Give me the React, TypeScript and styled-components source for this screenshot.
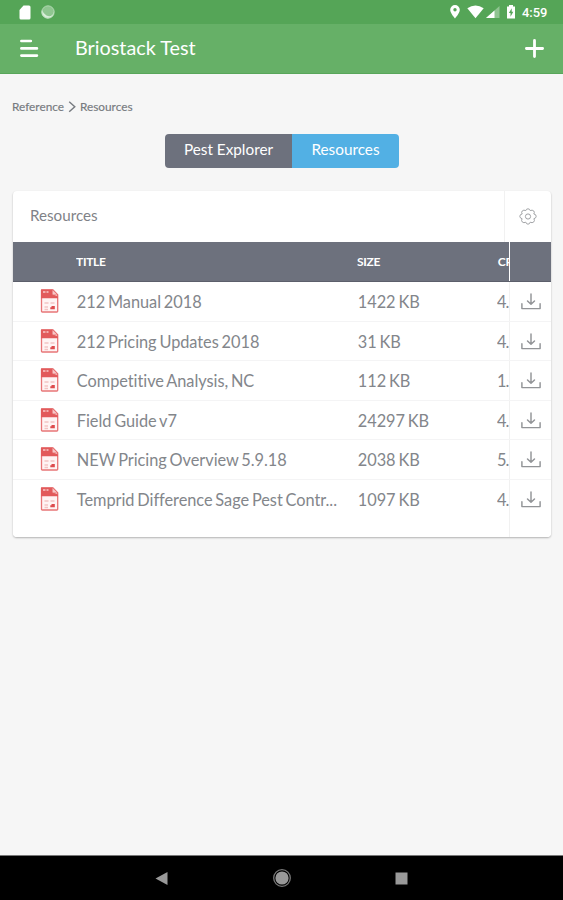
import React from 'react';
import styled, { createGlobalStyle } from 'styled-components';

const GlobalStyle = createGlobalStyle`
  * { box-sizing: border-box; }
  body { margin: 0; background: #f6f6f6; font-family: Lato, sans-serif; color: #7f8287; }
  svg { display: block; flex: none; }
  button { border: 0; padding: 0; margin: 0; background: none; font: inherit; color: inherit; }
`;

const Screen = styled.div`
  width: 563px;
  height: 900px;
  display: flex;
  flex-direction: column;
  overflow: hidden;
`;

const StatusBar = styled.div`
  height: 24px;
  flex: none;
  background: #55a557;
  display: flex;
  align-items: center;
  padding: 0 15px 0 19px;
  color: #fff;
`;

const StatusIcons = styled.div<{ $end?: boolean }>`
  display: flex;
  align-items: center;
  gap: ${p => (p.$end ? 0 : '10px')};
  margin-left: ${p => (p.$end ? 'auto' : 0)};
`;

const Clock = styled.span`
  width: 26px;
  margin-left: 6px;
  font: 500 12.9px/25px Roboto, sans-serif;
  white-space: nowrap;
`;

const AppBar = styled.header`
  height: 50px;
  flex: none;
  background: #66b067;
  border-bottom: 1px solid #58a65a;
  display: flex;
  align-items: center;
  padding: 0 19px 0 20px;
  color: #fff;
`;

const AppTitle = styled.h1`
  flex: 1;
  margin: 0 0 3px 36px;
  font-size: 19.8px;
  line-height: 46px;
  font-weight: 400;
`;

const Content = styled.main`
  flex: 1;
  padding: 25px 12px 0;
`;

const Breadcrumb = styled.nav`
  height: 16px;
  display: flex;
  align-items: center;
  gap: 4px;
  font-size: 11.8px;
  line-height: 16px;
  color: #777a7f;
  -webkit-text-stroke: 0.15px #777a7f;
`;

const Segments = styled.div`
  width: 234px;
  height: 34px;
  margin: 19px 0 0 153px;
  display: flex;
  border-radius: 4px;
  overflow: hidden;
`;

const Segment = styled.button<{ $active?: boolean }>`
  width: ${p => (p.$active ? 107 : 127)}px;
  height: 34px;
  padding-bottom: 4px;
  background: ${p => (p.$active ? '#52b0e4' : '#6d717d')};
  color: #fff;
  font-size: 15.3px;
`;

const Card = styled.section`
  width: 538px;
  height: 346px;
  margin: 23px 0 0 1px;
  background: #fff;
  border-radius: 4px;
  box-shadow: 0 1px 2px rgba(0, 0, 0, 0.28);
  overflow: hidden;
`;

const CardHeader = styled.div`
  height: 51px;
  display: flex;
  align-items: center;
`;

const CardTitle = styled.h2`
  flex: 1;
  margin: 0 0 3px;
  padding-left: 17px;
  font-size: 15.2px;
  font-weight: 400;
`;

const SettingsButton = styled.button`
  width: 47px;
  height: 51px;
  border-left: 1px solid #f1f1f1;
  display: flex;
  align-items: center;
  justify-content: center;
`;

const TableRow = styled.div<{ $head?: boolean; $last?: boolean }>`
  display: grid;
  grid-template-columns: 63px 281px 140px 12px 42px;
  height: ${p => (p.$head ? '40px' : p.$last ? '57.5px' : '39.5px')};
  line-height: ${p => (p.$head ? '40px' : '39.5px')};
  font-size: ${p => (p.$head ? 12 : 16.35)}px;
  font-weight: ${p => (p.$head ? 700 : 400)};
  letter-spacing: ${p => (p.$head ? '-0.3px' : '-0.04px')};
  word-spacing: -1.3px;
  color: ${p => (p.$head ? '#fff' : '#83868b')};
  background: ${p => (p.$head ? '#6d717d' : '#fff')};
  border-bottom: ${p => (p.$head ? '1px solid #5c5f6b' : p.$last ? '0' : '1px solid #f4f4f5')};
`;

const FileCell = styled.div`
  padding: 7px 0 0 27px;
`;

const TextCell = styled.div<{ $inset?: boolean; $tight?: boolean }>`
  padding-left: ${p => (p.$inset ? 0.8 : 0)}px;
  letter-spacing: ${p => (p.$tight ? '-0.9px' : 'inherit')};
  white-space: nowrap;
  overflow: hidden;
`;

const ActionCell = styled.div<{ $head?: boolean }>`
  border-left: ${p => (p.$head ? '1px solid #fff' : '1px solid #f1f1f1')};
  padding: 11px 0 0 11px;
`;

const NavBar = styled.footer`
  height: 45px;
  flex: none;
  border-top: 1px solid #777;
  background: #000;
  display: flex;
  align-items: center;
  justify-content: space-between;
  padding: 0 155px 0 155px;
`;

const StorageIcon = () => (
  <svg width="12" height="15" viewBox="0 0 12 15"><path d="M4.5 .5H10Q11.5 .5 11.5 2V13Q11.5 14.5 10 14.5H2Q.5 14.5 .5 13V5Z" fill="#fff" /></svg>
);

const SyncIcon = () => (
  <svg width="14" height="14" viewBox="0 0 14 14">
    <circle cx="7" cy="7" r="6.2" fill="#8fc690" />
    <path d="M1 5A6.2 6.2 0 0 0 9 13Q13 11.5 13.1 6.5Q11 13 5.5 10.5Q2.5 9 1 5Z" fill="#d9eeda" />
    <circle cx="7" cy="7" r="6.2" fill="none" stroke="#b4dab5" strokeWidth=".9" />
  </svg>
);

const SystemIcons = () => (
  <svg width="66" height="16" viewBox="0 0 66 16" fill="#fff">
    <path fillRule="evenodd" d="M5 1A4.8 4.8 0 0 0 .2 5.8C.2 9.3 5 14.5 5 14.5S9.8 9.3 9.8 5.8A4.8 4.8 0 0 0 5 1ZM5 4.1A1.7 1.7 0 1 1 5 7.5A1.7 1.7 0 0 1 5 4.1Z" />
    <path d="M17.3 4.3Q25.5-1.3 33.7 4.3L25.5 14.3Z" />
    <path d="M49.5 2V14H36Z" fillOpacity=".35" />
    <path d="M44.5 6.5V14H36Z" />
    <path fillRule="evenodd" d="M59 1H63V2.4H65V14.5H57V2.4H59ZM61.7 4.3L58.9 9H60.5V12.7L63.3 7.8H61.7Z" />
  </svg>
);

const MenuIcon = () => (
  <svg width="19" height="19" viewBox="0 0 19 19" stroke="#fff" strokeWidth="2.7" strokeLinecap="round"><path d="M1.4 2H10.8M1.4 9.4H16.9M1.4 16.6H16.9" /></svg>
);

const PlusIcon = () => (
  <svg width="19" height="19" viewBox="0 0 19 19" stroke="#fff" strokeWidth="2.8" strokeLinecap="round"><path d="M9.5 1.4V17.6M1.4 9.5H17.6" /></svg>
);

const ChevronIcon = () => (
  <svg width="8" height="12" viewBox="0 0 8 12" fill="none" stroke="#777b80" strokeWidth="1.4"><path d="M1.2.8L6.8 5.7L1.2 10.8" /></svg>
);

const GearIcon = () => (
  <svg width="18" height="17" viewBox="0 0 18 17" fill="none" stroke="#a0a2a5" strokeWidth="1">
    <path d="M9 .8Q10.8 .8 11.2 2.6Q13.3 1.5 14.8 3Q15.9 4.4 14.8 6Q17.1 6.2 17.2 8.3Q17.1 10.3 14.9 10.7Q16 12.5 14.8 13.9Q13.2 15.4 11.2 14.2Q10.8 16.1 9 16.2Q7.2 16.1 6.8 14.2Q4.8 15.4 3.2 13.9Q2 12.5 3.1 10.7Q.9 10.3 .8 8.3Q.9 6.2 3.2 6Q2.1 4.4 3.2 3Q4.7 1.5 6.8 2.6Q7.2 .8 9 .8Z" strokeLinejoin="round" />
    <circle cx="9" cy="8.5" r="2.6" />
  </svg>
);

const PdfIcon = () => (
  <svg width="19" height="24" viewBox="0 0 19 24">
    <path d="M1.8 1H13L17.7 5.7V22.2Q17.7 23 16.9 23H2.3Q1.5 23 1.5 22.2V1.3Z" fill="#fff4f4" stroke="#e87577" strokeWidth="1.3" />
    <path d="M1 .5H12V5L18 7.5V9.3H1Z" fill="#e25a5b" />
    <path d="M12.3.6V6H18Z" fill="#f7c8c8" stroke="#e56566" strokeWidth=".8" />
    <path d="M3 3H5.5M6.5 3H8.5" stroke="#f7caca" strokeWidth="1.7" />
    <path d="M4.5 14H8.5M10.5 14H14.5M4.5 18H8M4.5 20.5H8" stroke="#f3c3c3" strokeWidth="1.3" />
    <path d="M11.5 17H14.8V20.2H10.3V18.2H11.5Z" fill="#dd4b4d" />
  </svg>
);

const DownloadIcon = () => (
  <svg width="20" height="17" viewBox="0 0 20 17" fill="none" stroke="#929497" strokeWidth="1.45" strokeLinecap="round" strokeLinejoin="round">
    <path d="M10 1V11M6.5 7.9L10 11.3L13.5 7.9M.9 10.7V15.6H19.1V10.7" />
  </svg>
);

const resources = [
  { title: '212 Manual 2018', size: '1422 KB', created: '4.' },
  { title: '212 Pricing Updates 2018', size: '31 KB', created: '4.' },
  { title: 'Competitive Analysis, NC', size: '112 KB', created: '1.' },
  { title: 'Field Guide v7', size: '24297 KB', created: '4.' },
  { title: 'NEW Pricing Overview 5.9.18', size: '2038 KB', created: '5.' },
  { title: 'Temprid Difference Sage Pest Contr...', size: '1097 KB', created: '4.' },
];

export default function App() {
  return (
    <Screen>
      <GlobalStyle />
      <StatusBar>
        <StatusIcons><StorageIcon /><SyncIcon /></StatusIcons>
        <StatusIcons $end><SystemIcons /><Clock>4:59</Clock></StatusIcons>
      </StatusBar>
      <AppBar><MenuIcon /><AppTitle>Briostack Test</AppTitle><PlusIcon /></AppBar>
      <Content>
        <Breadcrumb><span>Reference</span><ChevronIcon /><span>Resources</span></Breadcrumb>
        <Segments><Segment>Pest Explorer</Segment><Segment $active>Resources</Segment></Segments>
        <Card>
          <CardHeader>
            <CardTitle>Resources</CardTitle>
            <SettingsButton aria-label="Settings"><GearIcon /></SettingsButton>
          </CardHeader>
          <TableRow $head>
            <div />
            <TextCell>TITLE</TextCell><TextCell>SIZE</TextCell><TextCell $inset>CREATED</TextCell>
            <ActionCell $head />
          </TableRow>
          {resources.map((r, i) => (
            <TableRow key={r.title} $last={i === resources.length - 1}>
              <FileCell><PdfIcon /></FileCell>
              <TextCell $inset>{r.title}</TextCell>
              <TextCell $inset>{r.size}</TextCell>
              <TextCell $tight>{r.created}</TextCell>
              <ActionCell><DownloadIcon /></ActionCell>
            </TableRow>
          ))}
        </Card>
      </Content>
      <NavBar>
        <svg width="13" height="15" viewBox="0 0 13 15"><path d="M.5 7.5L12.5 1V14Z" fill="#999" /></svg>
        <svg width="20" height="20" viewBox="0 0 20 20"><circle cx="10" cy="10" r="8.3" fill="none" stroke="#777" strokeWidth="1.3" /><circle cx="10" cy="10" r="6.6" fill="#999" /></svg>
        <svg width="13" height="13" viewBox="0 0 13 13"><path d="M.5.5H12.5V12.5H.5Z" fill="#999" /></svg>
      </NavBar>
    </Screen>
  );
}
